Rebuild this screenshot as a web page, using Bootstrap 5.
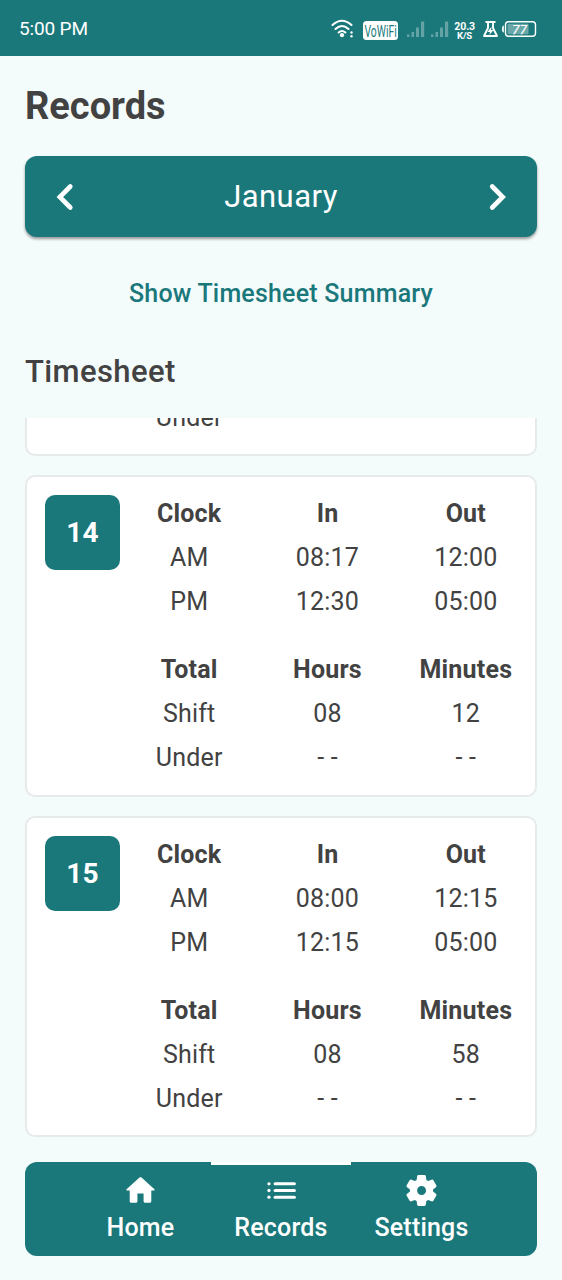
<!DOCTYPE html>
<html lang="en">
<head>
<meta charset="utf-8">
<meta name="viewport" content="width=device-width, initial-scale=1">
<title>Records</title>
<link href="https://cdn.jsdelivr.net/npm/bootstrap@5.3.0/dist/css/bootstrap.min.css" rel="stylesheet">
<style>
:root { --teal: #1a787b; --ink: #424242; }
body { font-family: Roboto, "Liberation Sans", sans-serif; background: #f4fbfb; color: var(--ink); height: 1280px; overflow: hidden; letter-spacing: .2px; }
.bg-teal { background: var(--teal); }
.status-bar { height: 56px; padding: 2px 25px 0 19px; font-size: 19px; letter-spacing: -.15px; }
.status-bar svg { display: block; margin-top: -1px; }
.status-bar span { margin-top: 1px; }
.screen { height: 1224px; padding: 0 25px 25px; }
.page-title { font-size: 38px; font-weight: 700; line-height: 44px; margin: 28px 0; letter-spacing: 0; }
.month-bar { height: 81px; border-radius: 12px; padding: 0 31px; box-shadow: 0 2px 3px rgba(0,0,0,.4); }
.month-name { font-size: 31px; letter-spacing: .45px; padding-top: 2px; }
.summary-link { font-size: 25px; font-weight: 500; line-height: 30px; color: var(--teal); margin: 42px 0 45px; }
.section-title { font-size: 31px; font-weight: 500; line-height: 36px; letter-spacing: .4px; margin: 0 0 28px; }
.sheet-list { height: 719px; gap: 19px; }
.sheet { height: 321.5px; flex: none; border: 2px solid #e6eaea; border-radius: 10px; background: #fff; padding: 18px 0 0 18px; }
.day-box { width: 75px; height: 75px; border-radius: 10px; font-size: 28px; font-weight: 700; line-height: 75px; }
.sheet-grid { font-size: 25px; line-height: 44px; margin-top: -3px; }
.total-head { margin-top: 24px; }
.last-row { margin-top: 244px; }
.tab-bar { height: 94px; margin-top: 25px; border-radius: 12px; font-size: 25px; font-weight: 500; }
.tab-item { width: 140.5px; padding-top: 7px; border-top: 3px solid transparent; line-height: 30px; }
.tab-item.current { border-top-color: #fff; }
.tab-item svg { width: 37px; height: 37px; display: block; margin-bottom: 4px; }
</style>
<script src="https://cdn.jsdelivr.net/npm/bootstrap@5.3.0/dist/js/bootstrap.bundle.min.js"></script>
</head>
<body>
<header class="status-bar bg-teal text-white d-flex align-items-center justify-content-between">
  <span>5:00 PM</span>
  <svg width="207" height="26" viewBox="330 15 207 26" fill="#fff">
    <g fill="none" stroke="#fff" stroke-width="2.100" stroke-linecap="round">
      <path d="M332.500 24Q342 15.500 351.500 24M335.500 28Q342 22 348.500 28M338.700 31.500Q342 28.500 345.300 31.500"/>
    </g>
    <circle cx="342" cy="34.200" r="2.100"/><circle cx="351.500" cy="31.500" r="1.200"/><circle cx="351.500" cy="35.300" r="1.200"/>
    <rect x="363" y="20" width="35" height="19" rx="3.500"/>
    <text x="364.500" y="36" font-size="17" fill="#1a787b" letter-spacing="0" transform="translate(364.500 0) scale(.61 1) translate(-364.500 0)">VoWiFi</text>
    <g opacity=".32">
      <path d="M407 33.500h2.500v2.500h-2.500zM411.500 31h2.500v5h-2.500zM416 26.500h3v9.500h-3zM421 20.500h3.200v15.500h-3.200zM431 33.500h2.500v2.500h-2.500zM435.500 31h2.500v5h-2.500zM440 26.500h3v9.500h-3zM445 20.500h3.200v15.500h-3.200z"/>
    </g>
    <text x="454.300" y="28.700" font-size="10.500" font-weight="700" textLength="20.700" lengthAdjust="spacingAndGlyphs">20.3</text>
    <text x="457" y="38" font-size="8.500" font-weight="700" textLength="15" lengthAdjust="spacingAndGlyphs">K/S</text>
    <path d="M485.500 21H495.500M488 21V27L484 35H497L493 27V21" fill="none" stroke="#fff" stroke-width="1.900" stroke-linejoin="round"/>
    <path d="M491.500 25.500L487.500 31H490L489.500 34L493.500 29H491Z"/>
    <rect x="505.500" y="20.800" width="30" height="14.500" rx="3" fill="none" stroke="#fff" stroke-width="1.400"/>
    <rect x="507.500" y="22.800" width="21" height="10.500" rx="1" fill-opacity=".35"/>
    <path d="M503.800 24.500Q502 24.500 502 28T503.800 31.500Z"/>
    <text x="512.300" y="32.600" font-size="13" textLength="14.500" font-style="italic" stroke="#fff" stroke-width=".25">77</text>
  </svg>
</header>

<main class="screen">
  <h1 class="page-title">Records</h1>
  <div class="month-bar bg-teal text-white d-flex align-items-center justify-content-between">
    <svg width="18" height="28" viewBox="0 0 18 28" fill="none" stroke="#fff" stroke-width="4.600" stroke-linecap="round"><path d="M14.300 3.500L3.800 14L14.300 24.500"/></svg>
    <span class="month-name">January</span>
    <svg width="18" height="28" viewBox="0 0 18 28" fill="none" stroke="#fff" stroke-width="4.600" stroke-linecap="round"><path d="M4.200 3.500L14.700 14L4.200 24.500"/></svg>
  </div>
  <div class="summary-link text-center">Show Timesheet Summary</div>
  <h2 class="section-title">Timesheet</h2>

  <section class="sheet-list d-flex flex-column justify-content-end overflow-hidden">
    <article class="sheet d-flex">
      <div class="day-box bg-teal flex-shrink-0"></div>
      <div class="sheet-grid row g-0 flex-grow-1 text-center align-content-start">
        <div class="col-4 last-row">Under</div>
      </div>
    </article>
    <article class="sheet d-flex">
      <div class="day-box bg-teal text-white text-center flex-shrink-0">14</div>
      <div class="sheet-grid row g-0 flex-grow-1 text-center align-content-start">
        <div class="col-4 fw-bold">Clock</div><div class="col-4 fw-bold">In</div><div class="col-4 fw-bold">Out</div>
        <div class="col-4">AM</div><div class="col-4">08:17</div><div class="col-4">12:00</div>
        <div class="col-4">PM</div><div class="col-4">12:30</div><div class="col-4">05:00</div>
        <div class="col-4 fw-bold total-head">Total</div><div class="col-4 fw-bold total-head">Hours</div><div class="col-4 fw-bold total-head">Minutes</div>
        <div class="col-4">Shift</div><div class="col-4">08</div><div class="col-4">12</div>
        <div class="col-4">Under</div><div class="col-4">- -</div><div class="col-4">- -</div>
      </div>
    </article>
    <article class="sheet d-flex">
      <div class="day-box bg-teal text-white text-center flex-shrink-0">15</div>
      <div class="sheet-grid row g-0 flex-grow-1 text-center align-content-start">
        <div class="col-4 fw-bold">Clock</div><div class="col-4 fw-bold">In</div><div class="col-4 fw-bold">Out</div>
        <div class="col-4">AM</div><div class="col-4">08:00</div><div class="col-4">12:15</div>
        <div class="col-4">PM</div><div class="col-4">12:15</div><div class="col-4">05:00</div>
        <div class="col-4 fw-bold total-head">Total</div><div class="col-4 fw-bold total-head">Hours</div><div class="col-4 fw-bold total-head">Minutes</div>
        <div class="col-4">Shift</div><div class="col-4">08</div><div class="col-4">58</div>
        <div class="col-4">Under</div><div class="col-4">- -</div><div class="col-4">- -</div>
      </div>
    </article>
  </section>

  <nav class="tab-bar bg-teal text-white d-flex justify-content-center">
    <div class="tab-item d-flex flex-column align-items-center">
      <svg viewBox="0 0 24 24" fill="#fff"><path d="M10 19v-5h4v5c0 .55.45 1 1 1h3c.55 0 1-.45 1-1v-7h1.700c.46 0 .68-.57.33-.87L12.670 3.600c-.38-.34-.96-.34-1.340 0l-8.360 7.530c-.34.3-.13.87.33.87H5v7c0 .55.45 1 1 1h3c.55 0 1-.45 1-1z"/></svg>
      <span>Home</span>
    </div>
    <div class="tab-item current d-flex flex-column align-items-center">
      <svg viewBox="0 0 36 36" fill="#fff"><circle cx="5.800" cy="11.500" r="1.600"/><circle cx="5.800" cy="18" r="1.600"/><circle cx="5.800" cy="24.500" r="1.600"/><rect x="10.300" y="10" width="21.700" height="3" rx="1.500"/><rect x="10.300" y="16.500" width="21.700" height="3" rx="1.500"/><rect x="10.300" y="23" width="21.700" height="3" rx="1.500"/></svg>
      <span>Records</span>
    </div>
    <div class="tab-item d-flex flex-column align-items-center">
      <svg viewBox="0 0 24 24" fill="#fff" fill-rule="evenodd"><path d="M19.500 12c0-.23-.01-.45-.03-.68l1.860-1.410c.4-.3.51-.86.26-1.300l-1.870-3.230a.987.987 0 0 0-1.250-.42l-2.150.91c-.37-.26-.76-.49-1.170-.68l-.29-2.310c-.06-.5-.49-.88-.99-.88h-3.730c-.51 0-.94.38-1 .88l-.29 2.310c-.41.19-.8.42-1.170.68l-2.150-.91c-.46-.2-1-.02-1.250.42L2.410 8.620c-.25.44-.14.99.26 1.300l1.860 1.410a7.343 7.343 0 0 0 0 1.350l-1.860 1.410c-.4.3-.51.86-.26 1.300l1.870 3.230c.25.44.79.62 1.250.42l2.150-.91c.37.26.76.49 1.170.68l.29 2.310c.06.5.49.88.99.88h3.730c.5 0 .93-.38.99-.88l.29-2.310c.41-.19.8-.42 1.170-.68l2.150.91c.46.2 1 .02 1.250-.42l1.870-3.230c.25-.44.14-.99-.26-1.300l-1.860-1.410c.03-.23.04-.45.04-.68zm-7.460 2.900a2.900 2.900 0 1 1 0-5.800 2.900 2.900 0 0 1 0 5.800z"/></svg>
      <span>Settings</span>
    </div>
  </nav>
</main>
</body>
</html>
